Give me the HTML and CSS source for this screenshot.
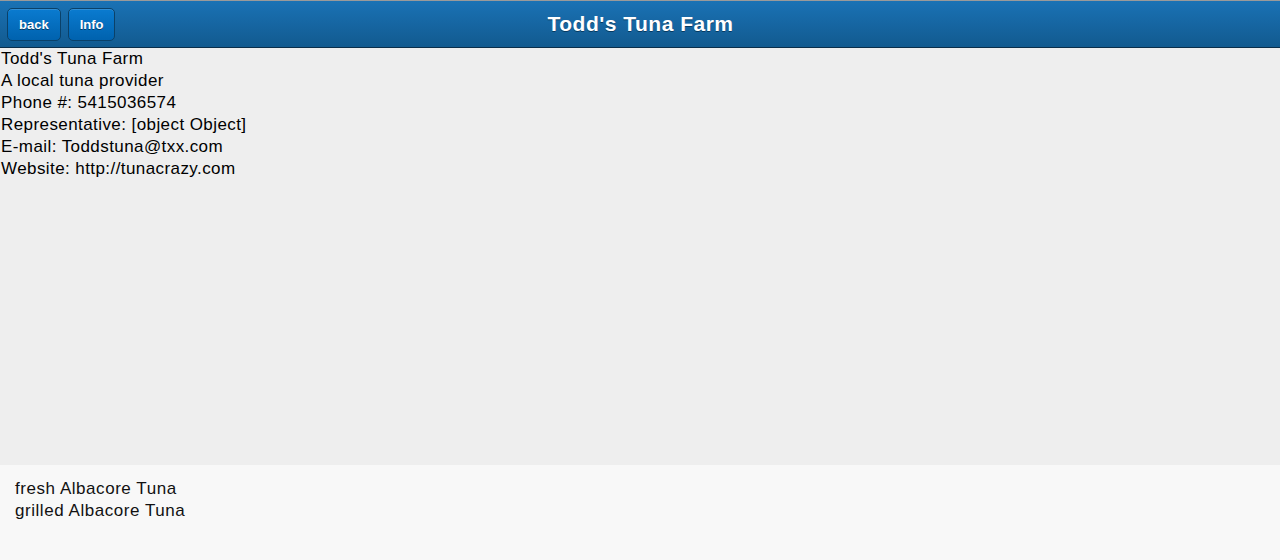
FILE: index.html
```html
<!DOCTYPE html>
<html>
<head>
<meta charset="utf-8">
<link rel="stylesheet" href="styles.css">
</head>
<body>
<div class="page">
  <header class="header">
    <div class="btns">
      <a class="btn">back</a>
      <a class="btn">Info</a>
    </div>
    <h1 class="title">Todd's Tuna Farm</h1>
  </header>
  <main class="content">
    <div>Todd's Tuna Farm</div>
    <div>A local tuna provider</div>
    <div>Phone #: 5415036574</div>
    <div>Representative: [object Object]</div>
    <div>E-mail: Toddstuna@txx.com</div>
    <div>Website: http://tunacrazy.com</div>
  </main>
  <section class="products">
    <div>fresh Albacore Tuna</div>
    <div>grilled Albacore Tuna</div>
  </section>
</div>
</body>
</html>
```
FILE: styles.css
```css
html, body {
  margin: 0;
  padding: 0;
  height: 100%;
}
body {
  font-family: "Liberation Sans", Arial, sans-serif;
  font-size: 17px;
  color: #000;
  background: #f8f8f8;
}
.page {
  display: flex;
  flex-direction: column;
  height: 560px;
}
.header {
  position: relative;
  height: 46px;
  border-top: 1px solid #9a9a9a;
  border-bottom: 1px solid #0a2e4a;
  background: linear-gradient(#1a72b5, #125a8f);
  display: flex;
  align-items: center;
  justify-content: center;
}
.btns {
  position: absolute;
  left: 7px;
  top: 7px;
  display: flex;
  gap: 7px;
}
.btn {
  box-sizing: border-box;
  height: 33px;
  padding: 0 11px;
  display: flex;
  align-items: center;
  border: 1px solid #0a4169;
  border-radius: 5px;
  background: linear-gradient(#0a7bd0, #0062ae);
  color: #fff;
  font-weight: bold;
  font-size: 13px;
  text-shadow: 0 1px 0 #0a3a64;
  box-shadow: inset 0 1px 0 rgba(255,255,255,0.15);
}
.title {
  margin: 0;
  color: #fff;
  font-size: 21px;
  letter-spacing: 0.5px;
  font-weight: bold;
  text-shadow: 0 1px 0 #063a61;
  padding-left: 1px;
}
.content {
  background: #eeeeee;
  height: 417px;
  line-height: 22px;
  letter-spacing: 0.42px;
  padding: 0 1px;
}
.products {
  flex: 1;
  background: #f8f8f8;
  padding: 13px 15px;
  line-height: 22px;
  letter-spacing: 0.55px;
  color: #111;
}
```
